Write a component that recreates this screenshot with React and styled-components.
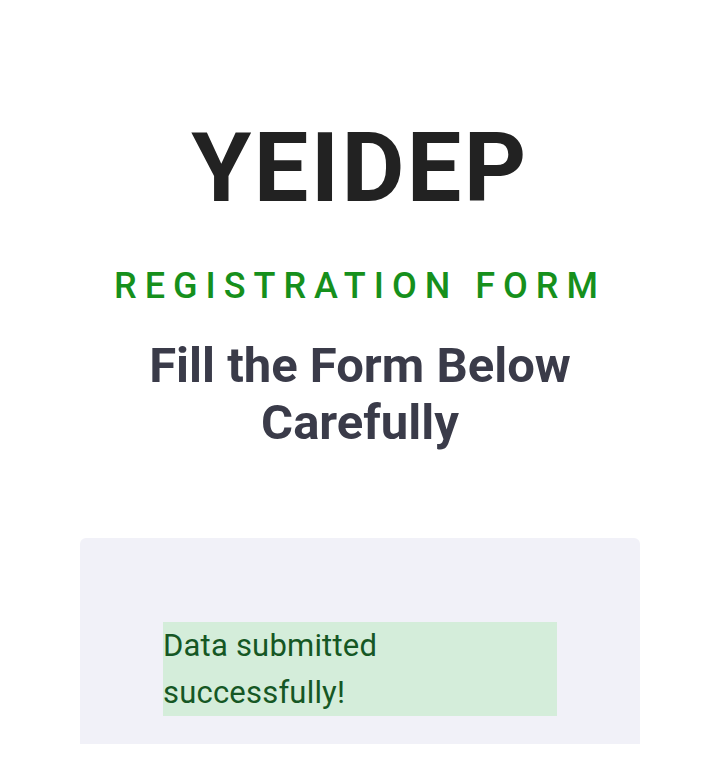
import React from 'react'
import styled, { createGlobalStyle } from 'styled-components'

const GlobalStyle = createGlobalStyle`
  body {
    margin: 0;
    background: #fff;
    font-family: Roboto, "Liberation Sans", sans-serif;
  }
`

const Page = styled.div`
  display: flex;
  flex-direction: column;
  align-items: center;
  padding-top: 120px;
`

const Brand = styled.h1`
  margin: 0;
  font-size: 97px;
  line-height: 1;
  font-weight: 700;
  letter-spacing: 2.4px;
  color: #222222;
`

const Tagline = styled.h2`
  margin: 51px 0 0;
  font-size: 36px;
  line-height: 1;
  font-weight: 500;
  letter-spacing: 8px;
  color: #16901c;
  text-transform: uppercase;
`

const Heading = styled.h3`
  margin: 33px 0 0;
  width: 460px;
  text-align: center;
  font-size: 49px;
  line-height: 57px;
  font-weight: 700;
  color: #3a3b49;
`

const Card = styled.div`
  margin-top: 87px;
  width: 560px;
  box-sizing: border-box;
  padding: 84px 83px 28px;
  background: #f1f1f8;
  border-radius: 6px 6px 0 0;
`

const Alert = styled.div`
  background: ${p => (p.$type === 'error' ? '#f8d7da' : '#d4edda')};
  color: ${p => (p.$type === 'error' ? '#721c24' : '#155724')};
  font-size: 31px;
  letter-spacing: 0.2px;
  line-height: 47px;
  width: 300px;
  padding-right: 94px;
`

export default function App() {
  return (
    <>
      <GlobalStyle />
      <Page>
        <Brand>YEIDEP</Brand>
        <Tagline>Registration Form</Tagline>
        <Heading>Fill the Form Below Carefully</Heading>
        <Card>
          <Alert $type="success">Data submitted successfully!</Alert>
        </Card>
      </Page>
    </>
  )
}
